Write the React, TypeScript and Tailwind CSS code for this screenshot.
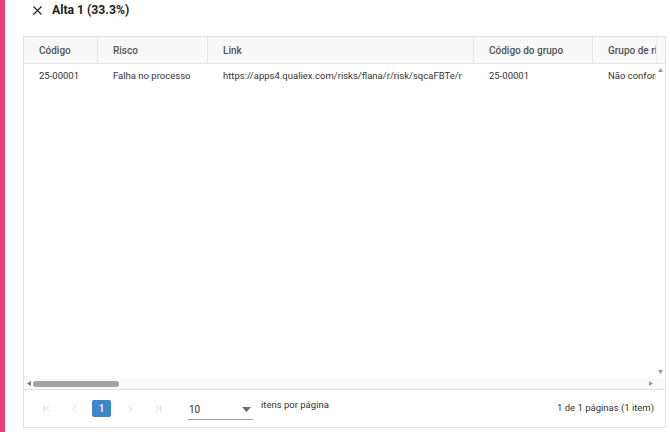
import React from "react";
import { X, ChevronFirst, ChevronLast, ChevronLeft, ChevronRight } from "lucide-react";

const cols = [
  { label: "Código", w: "w-[74px]" },
  { label: "Risco", w: "w-[110px]" },
  { label: "Link", w: "w-[266px]" },
  { label: "Código do grupo", w: "w-[119px]" },
  { label: "Grupo de risco", w: "w-[120px]" },
];

const row = ["25-00001", "Falha no processo", "https://apps4.qualiex.com/risks/flana/r/risk/sqcaFBTe/r", "25-00001", "Não conformidade"];

export default function App() {
  return (
    <div className="flex h-[432px] w-[670px] bg-white font-['Roboto',sans-serif] text-[#333]">
      <div className="w-[5px] shrink-0 bg-[#e83e72]" />
      <div className="flex min-w-0 flex-1 flex-col pl-[18px] pr-[4px] pb-[4px]">
        <div className="flex h-[36px] shrink-0 items-start pl-[7px] pt-[2px]">
          <X size={15} strokeWidth={1.8} className="mt-[1px] text-[#222]" />
          <span className="ml-[7px] text-[12.2px] font-bold leading-[17px] text-[#222]">Alta 1 (33.3%)</span>
        </div>
        <div className="flex min-h-0 flex-1 flex-col overflow-hidden border border-[#e4e4e4]">
          <div className="flex h-[27px] shrink-0 border-b border-[#e4e4e4] bg-[#f8f8f8]">
            <div className="flex min-w-0 flex-1 overflow-hidden">
              {cols.map((c, i) => (
                <div
                  key={c.label}
                  className={`${c.w} flex shrink-0 items-center whitespace-nowrap pl-[15px] text-[10px] font-medium text-[#555] ${i < cols.length - 1 ? "border-r border-[#e4e4e4]" : ""}`}
                >
                  {c.label}
                </div>
              ))}
            </div>
            <div className="w-[9px] shrink-0 border-l border-[#ececec]" />
          </div>
          <div className="flex min-h-0 flex-1">
            <div className="min-w-0 flex-1 overflow-hidden">
              <div className="flex h-[24px] items-center">
                {cols.map((c, i) => (
                  <div
                    key={i}
                    className={`${c.w} shrink-0 overflow-hidden whitespace-nowrap pl-[15px] pr-[16px] text-[9.5px] text-[#333]`}
                  >
                    {row[i]}
                  </div>
                ))}
              </div>
            </div>
            <div className="flex w-[9px] shrink-0 flex-col items-center justify-between py-[4px]">
              <svg width="5" height="4" viewBox="0 0 5 4"><path d="M2.5 0 L5 4 L0 4 Z" fill="#9a9a9a" /></svg>
              <svg width="5" height="4" viewBox="0 0 5 4"><path d="M0 0 L5 0 L2.5 4 Z" fill="#9a9a9a" /></svg>
            </div>
          </div>
          <div className="flex h-[11px] shrink-0 items-center bg-[#fafafa] pl-[3px] pr-[12px]">
            <svg width="4" height="5" viewBox="0 0 4 5"><path d="M0 2.5 L4 0 L4 5 Z" fill="#777" /></svg>
            <div className="ml-[2px] h-[6px] w-[86px] rounded-full bg-[#a3a3a3]" />
            <div className="flex-1" />
            <svg width="4" height="5" viewBox="0 0 4 5"><path d="M4 2.5 L0 0 L0 5 Z" fill="#9a9a9a" /></svg>
          </div>
          <div className="flex h-[38px] shrink-0 items-center border-t border-[#e4e4e4] pl-[16px] pr-[11px]">
            <div className="flex items-center text-[#c4c4c4]">
              <div className="flex w-[12px] justify-center"><ChevronFirst size={11} strokeWidth={1.5} /></div>
              <div className="ml-[16px] flex w-[12px] justify-center"><ChevronLeft size={11} strokeWidth={1.5} /></div>
              <div className="ml-[12px] flex h-[17px] w-[19px] items-center justify-center rounded-[2px] bg-[#3c87c7] text-[10px] font-medium text-white">1</div>
              <div className="ml-[13px] flex w-[12px] justify-center"><ChevronRight size={11} strokeWidth={1.5} /></div>
              <div className="ml-[16px] flex w-[12px] justify-center"><ChevronLast size={11} strokeWidth={1.5} /></div>
            </div>
            <div className="ml-[24px] flex h-[22px] w-[65px] items-center justify-between border-b border-[#9e9e9e] pl-[1px] pr-[2px] pt-[2px] text-[10px] text-[#333]">
              <span>10</span>
              <svg width="9" height="5" viewBox="0 0 9 5"><path d="M0 0 L9 0 L4.5 5 Z" fill="#6a6a6a" /></svg>
            </div>
            <span className="ml-[8px] -mt-[6px] text-[9.5px] text-[#333]">itens por página</span>
            <div className="flex-1" />
            <span className="text-[9.5px] text-[#333]">1 de 1 páginas (1 item)</span>
          </div>
        </div>
      </div>
    </div>
  );
}
